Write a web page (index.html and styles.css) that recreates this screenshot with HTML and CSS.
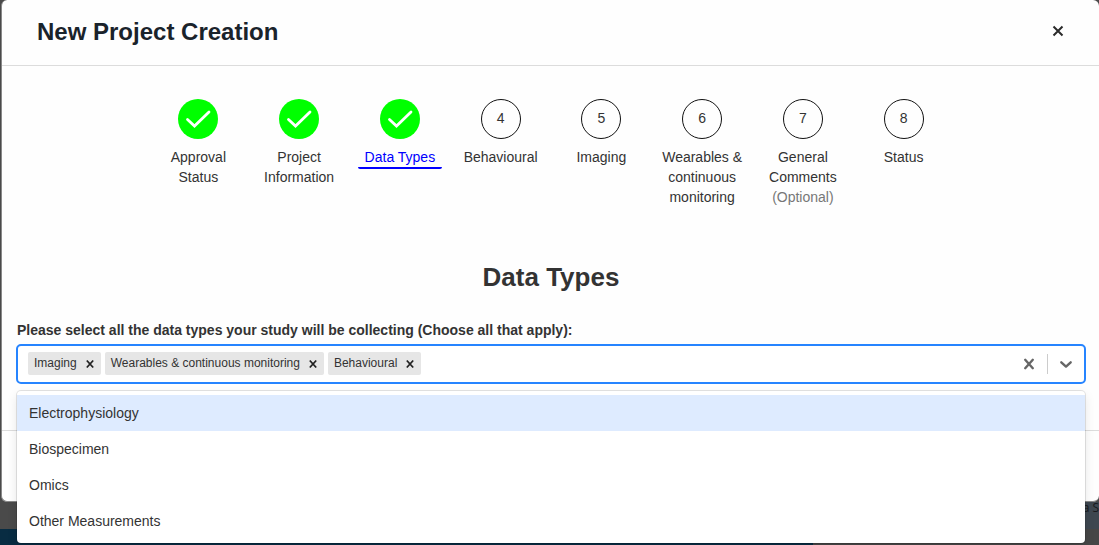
FILE: index.html
```html
<!DOCTYPE html>
<html lang="en">
<head>
<meta charset="utf-8">
<title>New Project Creation</title>
<link rel="stylesheet" href="styles.css">
</head>
<body>
<section class="modal" role="dialog" aria-labelledby="modal-title">
  <header class="modal-header">
    <h1 class="modal-title" id="modal-title">New Project Creation</h1>
    <button class="icon-button close" type="button" aria-label="Close">
      <svg width="12" height="12" viewBox="0 0 12 12"><path d="M1.5 1.5l9 9M10.5 1.5l-9 9" stroke="#2b2b2b" stroke-width="2"/></svg>
    </button>
  </header>
  <div class="modal-body">
    <ol class="steps">
      <li class="step"><span class="dot done"><svg width="40" height="40" viewBox="0 0 40 40"><path d="M9.5 20.5l7 6.5L31 13" /></svg></span><span class="step-label">Approval Status</span></li>
      <li class="step"><span class="dot done"><svg width="40" height="40" viewBox="0 0 40 40"><path d="M9.5 20.5l7 6.5L31 13" /></svg></span><span class="step-label">Project Information</span></li>
      <li class="step" aria-current="step"><span class="dot done"><svg width="40" height="40" viewBox="0 0 40 40"><path d="M9.5 20.5l7 6.5L31 13" /></svg></span><span class="step-label current">Data Types</span></li>
      <li class="step"><span class="dot">4</span><span class="step-label">Behavioural</span></li>
      <li class="step"><span class="dot">5</span><span class="step-label">Imaging</span></li>
      <li class="step"><span class="dot">6</span><span class="step-label">Wearables &amp; continuous monitoring</span></li>
      <li class="step"><span class="dot">7</span><span class="step-label">General Comments <span class="optional">(Optional)</span></span></li>
      <li class="step"><span class="dot">8</span><span class="step-label">Status</span></li>
    </ol>
    <h2 class="section-title">Data Types</h2>
    <label class="field-label" for="data-types">Please select all the data types your study will be collecting (Choose all that apply):</label>
    <div class="select">
      <div class="control">
        <div class="values">
          <span class="chip">Imaging<button class="icon-button" type="button" aria-label="Remove Imaging"><svg width="10" height="10" viewBox="0 0 10 10"><path d="M1.8 1.5l6.4 7M8.2 1.5l-6.4 7" stroke="#222" stroke-width="1.8"/></svg></button></span>
          <span class="chip">Wearables &amp; continuous monitoring<button class="icon-button" type="button" aria-label="Remove Wearables"><svg width="10" height="10" viewBox="0 0 10 10"><path d="M1.8 1.5l6.4 7M8.2 1.5l-6.4 7" stroke="#222" stroke-width="1.8"/></svg></button></span>
          <span class="chip">Behavioural<button class="icon-button" type="button" aria-label="Remove Behavioural"><svg width="10" height="10" viewBox="0 0 10 10"><path d="M1.8 1.5l6.4 7M8.2 1.5l-6.4 7" stroke="#222" stroke-width="1.8"/></svg></button></span>
          <input class="search" id="data-types" type="text" role="combobox" aria-expanded="true" aria-controls="options">
        </div>
        <button class="icon-button indicator" type="button" aria-label="Clear all">
          <svg width="20" height="20" viewBox="0 0 20 20"><path d="M6.2 5.8l7.6 8.4M13.8 5.8l-7.6 8.4" stroke="#666" stroke-width="2.4" stroke-linecap="round"/></svg>
        </button>
        <span class="separator"></span>
        <button class="icon-button indicator" type="button" aria-label="Toggle options">
          <svg width="20" height="20" viewBox="0 0 20 20"><path d="M5.3 8.3L10 12.6l4.7-4.3" fill="none" stroke="#666" stroke-width="2.4" stroke-linecap="round" stroke-linejoin="round"/></svg>
        </button>
      </div>
      <ul class="menu" id="options" role="listbox">
        <li class="option focused" role="option">Electrophysiology</li>
        <li class="option" role="option">Biospecimen</li>
        <li class="option" role="option">Omics</li>
        <li class="option" role="option">Other Measurements</li>
      </ul>
    </div>
  </div>
  <footer class="modal-footer"></footer>
</section>
<div class="page-behind">
  <div class="behind-row"><span class="behind-text">a S</span></div>
  <div class="behind-footer"></div>
</div>
</body>
</html>
```
FILE: styles.css
```css
* {
  box-sizing: border-box;
}

body {
  margin: 0;
  min-height: 100vh;
  display: flex;
  flex-direction: column;
  overflow: hidden;
  background: #4a4a4a;
  color: #333;
  font-family: "Liberation Sans", Arial, sans-serif;
  font-size: 14px;
  line-height: 20px;
}

.modal {
  margin-left: 1px;
  border: 1px solid #888;
  border-width: 0 0 1px 1px;
  border-radius: 6px;
  background: #fefefe;
}

.modal-header {
  display: flex;
  align-items: center;
  justify-content: space-between;
  padding: 16px 35px 17px;
  border-bottom: 1px solid #dcdcdc;
}

.modal-title {
  margin: 0;
  color: #1a232b;
  font-size: 24px;
  line-height: 32px;
}

.icon-button {
  display: flex;
  align-items: center;
  justify-content: center;
  padding: 0;
  border: 0;
  background: none;
  cursor: pointer;
}

.close {
  padding-bottom: 2px;
}

.modal-body {
  padding: 33px 14px 46px 15px;
}

.steps {
  display: grid;
  grid-template-columns: repeat(8, 1fr);
  max-width: 806px;
  min-height: 108px;
  margin: 0 auto;
  padding: 0;
  list-style: none;
}

.step {
  display: flex;
  flex-direction: column;
  align-items: center;
  gap: 8px;
  padding: 0 8px;
  text-align: center;
}

.dot {
  display: flex;
  align-items: center;
  justify-content: center;
  width: 40px;
  height: 40px;
  padding-bottom: 2px;
  border: 1px solid #111;
  border-radius: 50%;
}

.done {
  padding: 0;
  border: 0;
  background: #0f0;
}

.done path {
  fill: none;
  stroke: #fff;
  stroke-width: 2.8;
  stroke-linecap: round;
}

.step-label {
  width: 100%;
}

.current {
  border-bottom: 2px solid #00f;
  border-radius: 2px;
  color: #00f;
}

.optional {
  color: #777;
}

.section-title {
  margin: 54px 0 28px;
  font-size: 26px;
  line-height: 32px;
  text-align: center;
}

.field-label {
  display: block;
  margin-bottom: 5px;
  font-weight: bold;
  line-height: 18px;
}

.select {
  position: relative;
}

.control {
  display: flex;
  align-items: center;
  min-height: 40px;
  margin: 0 -1px;
  border: 2px solid #2684ff;
  border-radius: 5px;
  background: #fff;
}

.values {
  display: flex;
  flex: 1;
  align-items: center;
  gap: 4px;
  padding: 0 10px 2px;
}

.chip {
  display: flex;
  gap: 8px;
  padding: 0 6px;
  border-radius: 2px;
  background: #e6e6e6;
  font-size: 12px;
  line-height: 23px;
  white-space: nowrap;
}

.chip .icon-button {
  padding-top: 2px;
}

.search {
  flex: 1;
  min-width: 2px;
  border: 0;
  outline: 0;
  background: none;
  font: inherit;
}

.indicator {
  padding: 8px;
}

.separator {
  width: 1px;
  height: 20px;
  background: #ccc;
}

.menu {
  position: absolute;
  top: 100%;
  left: 0;
  right: 0;
  z-index: 1;
  margin: 7px 0 0;
  padding: 4px 0;
  border-radius: 4px;
  background: #fff;
  box-shadow: 0 0 0 1px rgba(0, 0, 0, 0.1), 0 4px 11px rgba(0, 0, 0, 0.1);
  list-style: none;
}

.option {
  padding: 8px 12px;
}

.focused {
  background: #deebff;
}

.modal-footer {
  min-height: 71px;
  border-top: 1px solid #dcdcdc;
}

.page-behind {
  display: flex;
  flex: 1;
  flex-direction: column;
  overflow: hidden;
}

.behind-row {
  display: flex;
  justify-content: flex-end;
  height: 27px;
  background: linear-gradient(to right, #4a4a4a 97%, #3e4750 97%);
}

.behind-text {
  color: #17191c;
  font-family: "Open Sans", sans-serif;
  font-size: 12px;
  line-height: 12px;
  white-space: nowrap;
}

.behind-footer {
  flex: 1;
  background: linear-gradient(to right, #082c42 74%, #464646 74%);
}
```
